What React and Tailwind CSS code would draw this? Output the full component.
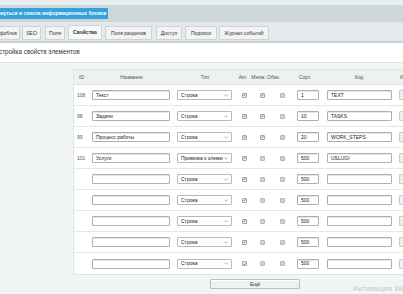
import React from "react";

const tabs = [
  { label: "Инфоблок", cls: "-ml-[10px] w-[30px]", active: false },
  { label: "SEO", cls: "ml-[2px] w-[19px]", active: false },
  { label: "Поля", cls: "ml-[4px] w-[20px]", active: false },
  { label: "Свойства", cls: "ml-[3px] w-[34px]", active: true },
  { label: "Поля разделов", cls: "ml-[3px] w-[47px]", active: false },
  { label: "Доступ", cls: "ml-[4px] w-[26px]", active: false },
  { label: "Подписи", cls: "ml-[3px] w-[32px]", active: false },
  { label: "Журнал событий", cls: "ml-[2px] w-[50px]", active: false },
];

const rows = [
  { id: "108", name: "Текст", type: "Строка", akt: true, mn: true, ob: false, sort: "1", code: "TEXT" },
  { id: "98", name: "Задачи", type: "Строка", akt: true, mn: true, ob: false, sort: "10", code: "TASKS" },
  { id: "99", name: "Процесс работы", type: "Строка", akt: true, mn: true, ob: false, sort: "20", code: "WORK_STEPS" },
  { id: "101", name: "Услуги", type: "Привязка к элементам", akt: true, mn: false, ob: false, sort: "500", code: "USLUGI" },
  { id: "", name: "", type: "Строка", akt: true, mn: false, ob: false, sort: "500", code: "" },
  { id: "", name: "", type: "Строка", akt: true, mn: false, ob: false, sort: "500", code: "" },
  { id: "", name: "", type: "Строка", akt: true, mn: false, ob: false, sort: "500", code: "" },
  { id: "", name: "", type: "Строка", akt: true, mn: false, ob: false, sort: "500", code: "" },
  { id: "", name: "", type: "Строка", akt: true, mn: false, ob: false, sort: "500", code: "" },
];

function Check({ on, cls }) {
  return on ? (
    <div className={"w-[5px] h-[5px] shrink-0 rounded-[1px] border border-[#9ea6aa] bg-[#eceff0] flex items-center justify-center " + cls}>
      <svg width="4" height="4" viewBox="0 0 4 4">
        <path d="M0.6 2 L1.6 3 L3.4 0.8" fill="none" stroke="#4a5256" strokeWidth="0.8" />
      </svg>
    </div>
  ) : (
    <div className={"w-[5px] h-[5px] shrink-0 rounded-[1px] border border-[#b0b7ba] bg-[#cfd4d7] " + cls} />
  );
}

function Field({ value, cls }) {
  return (
    <div className={"h-[10px] shrink-0 border border-[#a9b1b5] rounded-[1px] bg-white text-[5px] leading-none text-[#222] pl-[3px] flex items-center overflow-hidden whitespace-nowrap shadow-[inset_0_1px_0_#e2e6e8] " + cls}>
      {value}
    </div>
  );
}

export default function App() {
  return (
    <div className="w-[403px] h-[294px] overflow-hidden bg-[#f1f5f6] font-['Liberation_Sans',Arial,sans-serif] flex flex-col relative">
      <div className="h-[5px] bg-[#e8edef] shrink-0" />
      <div className="h-[17px] bg-[#cdd7d9] flex items-center shrink-0">
        <div className="h-[11px] w-[121px] -ml-[13px] shrink-0 bg-[#34a2dd] rounded-[1px] text-white text-[5px] font-bold leading-none flex items-center pl-[4px] whitespace-nowrap">
          Вернуться в список информационных блоков
        </div>
      </div>
      <div className="h-[19px] bg-[#e4eaec] flex items-end shrink-0 pb-[1px]">
        {tabs.map((t) => (
          <div
            key={t.label}
            className={
              "shrink-0 flex items-center justify-center whitespace-nowrap text-[5px] leading-none text-[#333] border border-[#cdd3d5] rounded-t-[1px] " +
              t.cls +
              (t.active ? " h-[15px] bg-[#f7f9f9] font-bold" : " h-[14px] bg-[#f2f4f4]")
            }
          >
            {t.label}
          </div>
        ))}
      </div>
      <div className="h-[2px] bg-[#c8cfd1] shrink-0" />
      <div className="h-[19px] bg-white flex items-center shrink-0">
        <div className="-ml-[9px] text-[6.3px] leading-none text-[#333] whitespace-nowrap">Настройка свойств элементов</div>
      </div>
      <div className="h-px bg-[#dce2e4] shrink-0" />
      <div className="flex-1 pl-[73px] pt-[6px] flex flex-col">
        <div className="w-[340px] shrink-0 bg-white border border-[#dfe4e6] flex flex-col">
          <div className="h-[15px] bg-[#edf1f2] border-b border-[#dfe4e6] flex items-center text-[5px] leading-none text-[#555] whitespace-nowrap">
            <div className="w-[15px] text-center shrink-0">ID</div>
            <div className="w-[85px] text-center shrink-0">Название</div>
            <div className="w-[62px] text-center shrink-0">Тип</div>
            <div className="w-[14px] text-center shrink-0">Акт.</div>
            <div className="w-[17px] text-center shrink-0">Множ.</div>
            <div className="w-[13px] text-center shrink-0">Обяз.</div>
            <div className="w-[50px] text-center shrink-0">Сорт.</div>
            <div className="w-[58px] text-center shrink-0">Код</div>
            <div className="pl-[12px] shrink-0">Изм.</div>
          </div>
          {rows.map((r, i) => (
            <div key={i} className="h-[21px] shrink-0 border-b border-[#e3e8e9] last:border-b-0 flex items-center">
              <div className="w-[15px] shrink-0 pl-[3px] text-[5px] leading-none text-[#555]">{r.id}</div>
              <Field value={r.name} cls="ml-[3px] w-[78px]" />
              <div className="ml-[7px] w-[55px] h-[10px] shrink-0 border border-[#b5bcbf] rounded-[1px] bg-white flex items-center justify-between text-[5px] leading-none text-[#222] pl-[3px] pr-[3px] overflow-hidden whitespace-nowrap">
                <span className="overflow-hidden">{r.type}</span>
                <svg width="4" height="3" viewBox="0 0 4 3" className="shrink-0 ml-[1px]">
                  <path d="M0.5 0.8 L2 2.2 L3.5 0.8" fill="none" stroke="#777" strokeWidth="0.6" />
                </svg>
              </div>
              <Check on={r.akt} cls="ml-[10px]" />
              <Check on={r.mn} cls="ml-[13px]" />
              <Check on={r.ob} cls="ml-[15px]" />
              <Field value={r.sort} cls="ml-[12px] w-[22px]" />
              <Field value={r.code} cls="ml-[8px] w-[65px]" />
              <div className="ml-[7px] w-[12px] h-[10px] shrink-0 border border-[#c6cbcd] rounded-[1px] bg-[#eceff0]" />
            </div>
          ))}
        </div>
        <div className="mt-[4px] ml-[137px] w-[90px] h-[10px] shrink-0 border border-[#b9c0c3] rounded-[1px] bg-[#eef1f2] shadow-[inset_0_1px_0_#ffffff] flex items-center justify-center text-[5px] leading-none text-[#333]">
          Ещё
        </div>
      </div>
      <div className="absolute left-[353px] top-[285px] text-[8px] leading-none text-[#c4c9cc] whitespace-nowrap">
        Активация Windows
      </div>
    </div>
  );
}
